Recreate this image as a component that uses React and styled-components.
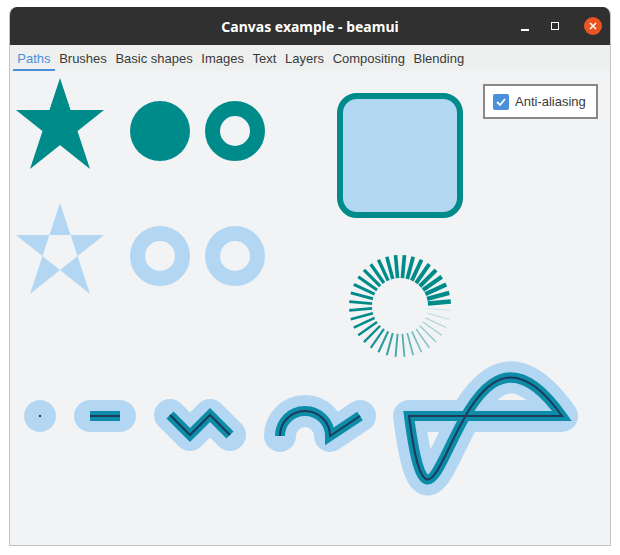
import React from 'react';
import styled, { createGlobalStyle } from 'styled-components';

const GlobalStyle = createGlobalStyle`
    body {
        margin: 0;
        background: #ffffff;
        font-family: "Liberation Sans", Arial, sans-serif;
    }
`;

const Window = styled.div`
    margin: 7px 0 0 9px;
    width: 602px;
    height: 539px;
    display: flex;
    flex-direction: column;
    box-sizing: border-box;
    border: 1px solid #c2c2c2;
    border-top: none;
    border-radius: 8px 8px 0 0;
    overflow: hidden;
    background: #f2f3f5;
`;

const TitleBar = styled.div`
    height: 38px;
    flex: none;
    display: flex;
    align-items: center;
    justify-content: center;
    position: relative;
    background: #303030;
    color: #ffffff;
    font-family: "Noto Sans", "DejaVu Sans", sans-serif;
    font-weight: bold;
    font-size: 14px;
    margin: 0 -1px;
`;

const Controls = styled.div`
    position: absolute;
    right: 9px;
    top: 0;
    height: 100%;
    display: flex;
    align-items: center;
    gap: 14px;
`;

const Minimize = styled.div`
    width: 8px;
    height: 2px;
    margin-top: 8px;
    margin-right: 8px;
    background: #ffffff;
`;

const Maximize = styled.div`
    width: 6px;
    height: 6px;
    border: 1px solid #ffffff;
    margin-right: 11px;
`;

const Close = styled.div`
    width: 18px;
    height: 18px;
    border-radius: 50%;
    background: #e95420;
    display: flex;
    align-items: center;
    justify-content: center;
`;

const TabBar = styled.div`
    height: 26px;
    flex: none;
    display: flex;
    align-items: stretch;
    padding-left: 3px;
    background: #eef0f0;
`;

const Tab = styled.div`
    padding: 2px 4.3px 0;
    display: flex;
    align-items: center;
    font-size: 13px;
    color: ${p => (p.$active ? '#4a90d9' : '#3a3a3a')};
    border-bottom: 2px solid ${p => (p.$active ? '#4a90d9' : 'transparent')};
`;

const Canvas = styled.div`
    flex: 1;
    position: relative;
    background: #f2f3f5;
`;

const AntiAlias = styled.label`
    position: absolute;
    top: 13px;
    right: 12px;
    width: 115px;
    height: 35px;
    box-sizing: border-box;
    border: 2px solid #888888;
    background: #ffffff;
    display: flex;
    align-items: center;
    gap: 6px;
    padding-left: 8px;
    font-size: 13px;
    color: #3a3a3a;
`;

const CheckBox = styled.span`
    width: 16px;
    height: 16px;
    border-radius: 2px;
    background: #4a90d9;
    display: flex;
    align-items: center;
    justify-content: center;
`;

const TEAL = '#008b8b';
const LIGHT = '#b3d7f2';
const STROKE_TEAL = '#0d8ca8';
const DARK = '#1c3a5c';

const star = (dy) =>
    `M60,${78 + dy} L90,${169 + dy} L16,${110 + dy} L104,${110 + dy} L30,${169 + dy} Z`;

const strokePaths = [
    'M90,416 L120,416',
    'M170,415 L190,435 L210,415 L230,435',
    'M280,436 A25,25 0 0 1 330,436 L360,416',
    'M409,416 C435,616 456,266 562,416 Z',
];

function Spinner() {
    const n = 36;
    const lines = [];
    for (let i = 0; i < n; i++) {
        const a = ((5 + (i * 360) / n) * Math.PI) / 180;
        const f = i / (n - 1);
        const c = Math.cos(a);
        const s = Math.sin(a);
        lines.push(
            <line
                key={i}
                x1={400 + c * 28}
                y1={306 + s * 28}
                x2={400 + c * 51}
                y2={306 + s * 51}
                stroke={TEAL}
                strokeWidth={1 + 3.5 * f}
                strokeOpacity={Math.min(1, 0.15 + f * 2.2)}
            />
        );
    }
    return <g>{lines}</g>;
}

function Drawing() {
    return (
        <svg width="600" height="474" style={{ display: 'block' }}>
            <g transform="translate(-10,-71)">
                <path d={star(0)} fill={TEAL} fillRule="nonzero" />
                <path d={star(125)} fill={LIGHT} fillRule="evenodd" />

                <circle cx="160" cy="131" r="30" fill={TEAL} />
                <circle cx="235" cy="131" r="22.5" fill="none" stroke={TEAL} strokeWidth="15" />
                <circle cx="160" cy="256" r="22.5" fill="none" stroke={LIGHT} strokeWidth="15" />
                <circle cx="235" cy="256" r="22.5" fill="none" stroke={LIGHT} strokeWidth="15" />

                <rect x="340" y="96" width="120" height="119" rx="17" fill="#b2d7f2" stroke={TEAL} strokeWidth="6" />

                <Spinner />

                <circle cx="40" cy="416" r="16" fill={LIGHT} />
                <rect x="39" y="415" width="2" height="2" fill={DARK} />

                {strokePaths.map((d, i) => (
                    <g key={i} fill="none">
                        <path d={d} stroke={LIGHT} strokeWidth="32" strokeLinecap="round" strokeLinejoin="round" />
                        <path d={d} stroke={STROKE_TEAL} strokeWidth="10" strokeLinecap="butt" strokeLinejoin="miter" />
                        <path d={d} stroke={DARK} strokeWidth="2" />
                    </g>
                ))}
            </g>
        </svg>
    );
}

const tabs = ['Paths', 'Brushes', 'Basic shapes', 'Images', 'Text', 'Layers', 'Compositing', 'Blending'];

export default function App() {
    return (
        <>
            <GlobalStyle />
            <Window>
                <TitleBar>
                    Canvas example - beamui
                    <Controls>
                        <Minimize />
                        <Maximize />
                        <Close>
                            <svg width="8" height="8" viewBox="0 0 8 8">
                                <path d="M1,1 L7,7 M7,1 L1,7" stroke="#fff" strokeWidth="1.5" />
                            </svg>
                        </Close>
                    </Controls>
                </TitleBar>
                <TabBar>
                    {tabs.map((t, i) => (
                        <Tab key={t} $active={i === 0}>{t}</Tab>
                    ))}
                </TabBar>
                <Canvas>
                    <Drawing />
                    <AntiAlias>
                        <CheckBox>
                            <svg width="10" height="8" viewBox="0 0 10 8">
                                <path d="M1,4 L4,7 L9,1" fill="none" stroke="#fff" strokeWidth="1.8" />
                            </svg>
                        </CheckBox>
                        Anti-aliasing
                    </AntiAlias>
                </Canvas>
            </Window>
        </>
    );
}
